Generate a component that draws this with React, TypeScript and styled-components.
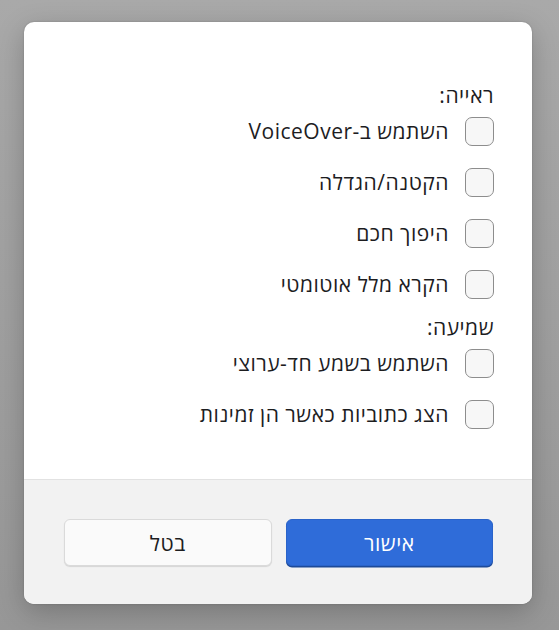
import * as React from 'react';
import styled, { createGlobalStyle } from 'styled-components';

const GlobalStyle = createGlobalStyle`
	html, body {
		margin: 0;
		padding: 0;
	}
	body {
		background: linear-gradient(#a9a9a9, #979797);
		min-height: 630px;
		font-family: 'Open Sans', 'DejaVu Sans', sans-serif;
	}
`;

const Page = styled.div`
	padding: 22px 27px 26px 24px;
`;

const Dialog = styled.div`
	direction: rtl;
	width: 508px;
	height: 582px;
	border-radius: 10px;
	background: #ffffff;
	overflow: hidden;
	display: flex;
	flex-direction: column;
	box-shadow: 0 8px 28px rgba(0, 0, 0, 0.22), 0 0 2px rgba(0, 0, 0, 0.2);
`;

const Content = styled.div`
	flex: 1;
	padding: 61px 38px 0 38px;
	color: #1d1d1f;
`;

const SectionTitle = styled.div<{ $first?: boolean }>`
	font-size: 21px;
	line-height: 24px;
	letter-spacing: 0.5px;
	margin-top: ${(p) => (p.$first ? '0' : '16px')};
	margin-bottom: 9px;
`;

const OptionList = styled.div`
	display: flex;
	flex-direction: column;
	gap: 21px;
`;

const Option = styled.label`
	display: flex;
	align-items: center;
	gap: 16px;
	height: 30px;
	font-size: 21px;
	letter-spacing: 0.5px;
	cursor: pointer;
`;

const Box = styled.span`
	width: 27px;
	height: 27px;
	flex: none;
	border: 1.5px solid #8d8d8d;
	border-radius: 7px;
	background: #f7f7f7;
`;

const Footer = styled.div`
	height: 125px;
	box-sizing: border-box;
	border-top: 1px solid #e2e2e2;
	background: #f2f2f2;
	display: flex;
	gap: 14px;
	padding: 39px 39px 0 40px;
`;

const Button = styled.button<{ $primary?: boolean }>`
	width: 208px;
	height: 47px;
	border-radius: 6px;
	font-family: inherit;
	font-size: 21px;
	letter-spacing: 0.5px;
	cursor: pointer;
	color: ${(p) => (p.$primary ? '#ffffff' : '#1d1d1f')};
	background: ${(p) => (p.$primary ? '#2f6cd9' : '#fafafa')};
	border: 1px solid ${(p) => (p.$primary ? '#2a63c9' : '#dadada')};
	box-shadow: ${(p) =>
		p.$primary ? '0 1.5px 0 #1d4a99' : '0 1px 1px rgba(0, 0, 0, 0.12)'};
`;

const vision = ['השתמש ב-VoiceOver', 'הקטנה/הגדלה', 'היפוך חכם', 'הקרא מלל אוטומטי'];
const hearing = ['השתמש בשמע חד-ערוצי', 'הצג כתוביות כאשר הן זמינות'];

export default function App() {
	return (
		<>
			<GlobalStyle />
			<Page>
				<Dialog>
					<Content>
						<SectionTitle $first>ראייה:</SectionTitle>
						<OptionList>
							{vision.map((label) => (
								<Option key={label}>
									<Box />
									{label}
								</Option>
							))}
						</OptionList>
						<SectionTitle>שמיעה:</SectionTitle>
						<OptionList>
							{hearing.map((label) => (
								<Option key={label}>
									<Box />
									{label}
								</Option>
							))}
						</OptionList>
					</Content>
					<Footer>
						<Button $primary>אישור</Button>
						<Button>בטל</Button>
					</Footer>
				</Dialog>
			</Page>
		</>
	);
}
